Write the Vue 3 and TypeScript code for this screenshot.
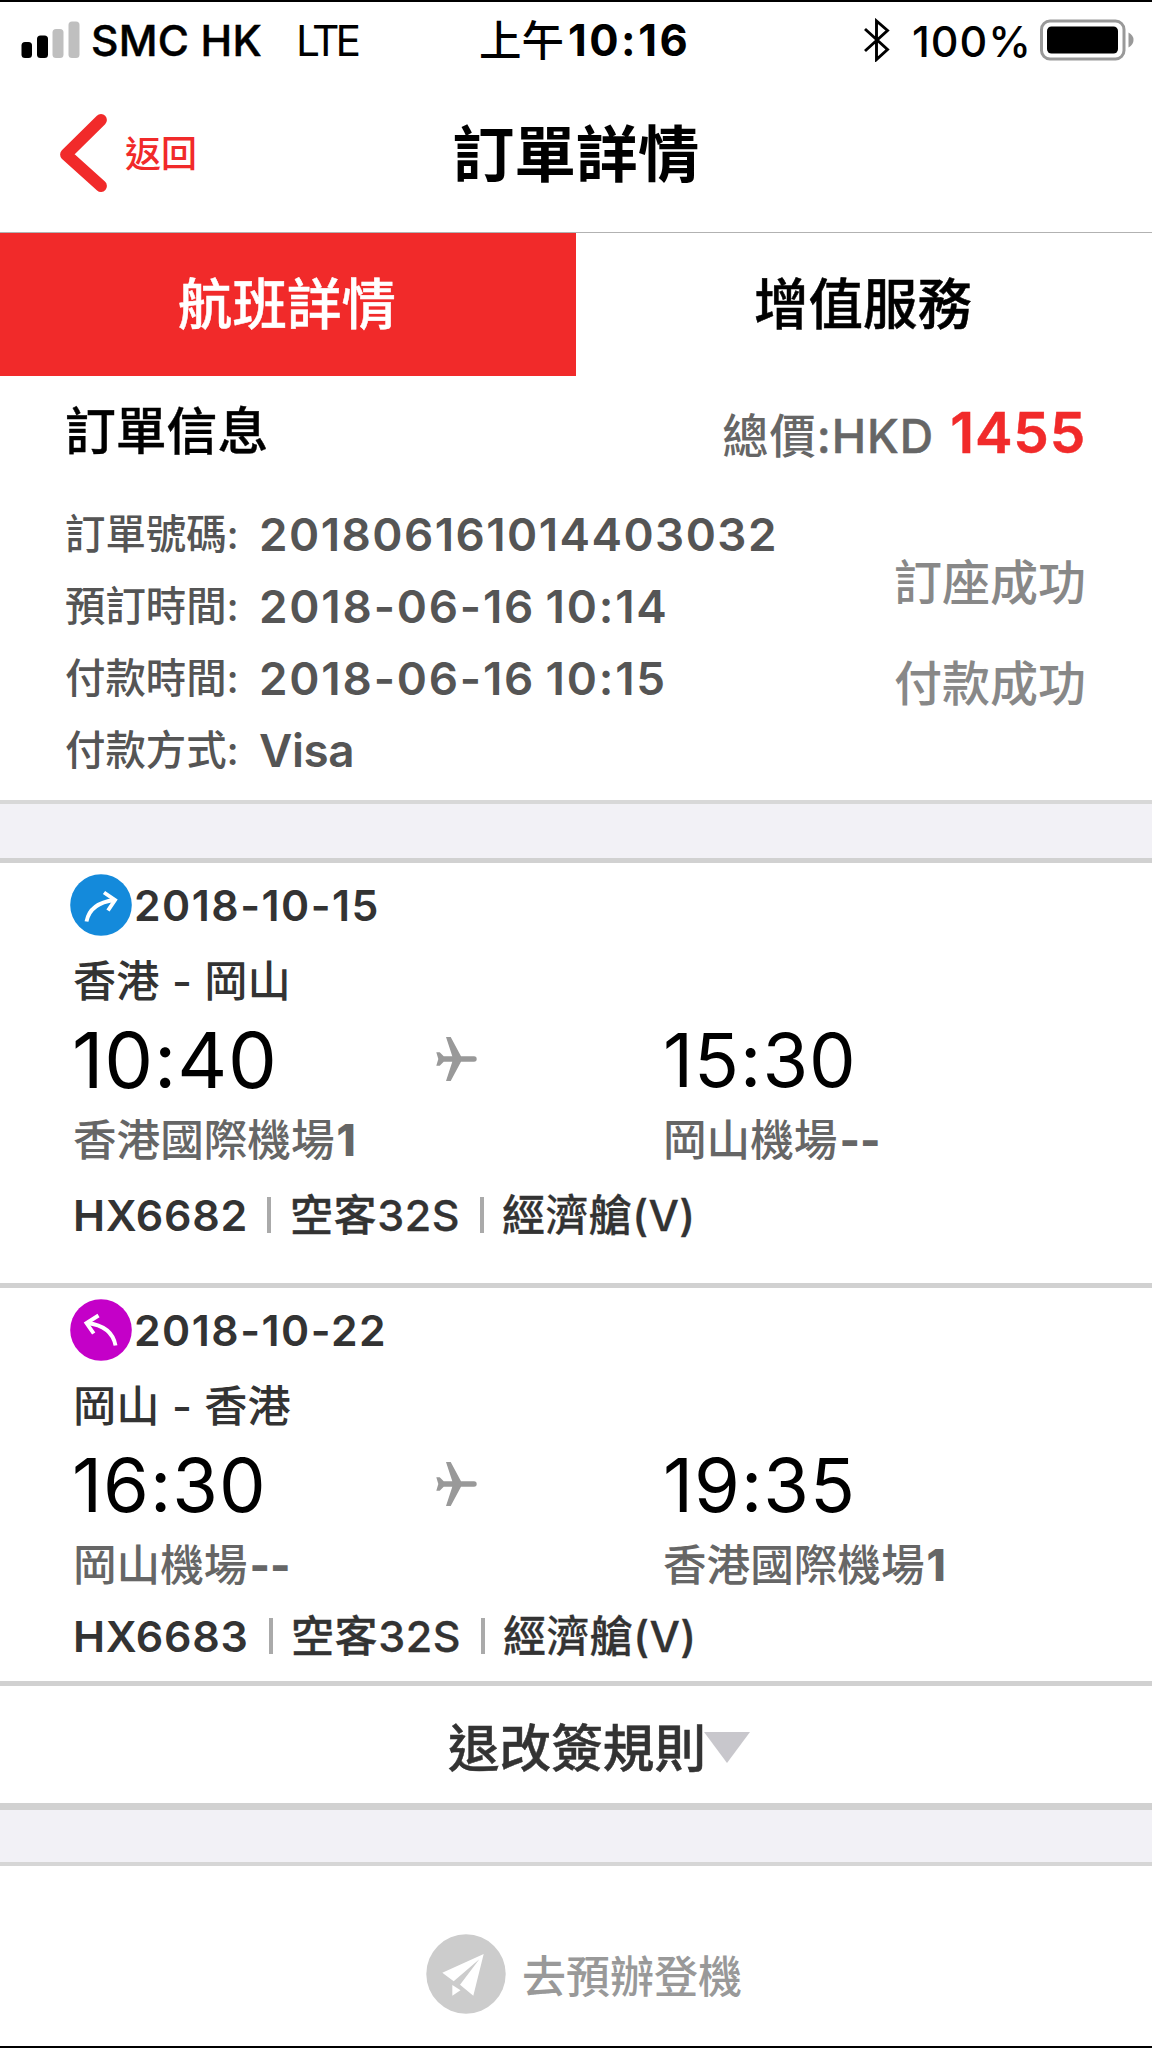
<script setup lang="ts">
interface Detail { label: string; value: string; kind: string }
interface Flight {
  id: string
  inbound: boolean
  date: string
  route: string
  depart: string
  arrive: string
  from: string
  fromTerminal: string
  to: string
  toTerminal: string
  flightNo: string
  craft: string
  cabin: string
}

const details: Detail[] = [
  { label: '訂單號碼:', value: '201806161014403032', kind: 'order-number' },
  { label: '預訂時間:', value: '2018-06-16 10:14', kind: 'order-time' },
  { label: '付款時間:', value: '2018-06-16 10:15', kind: 'order-time' },
  { label: '付款方式:', value: 'Visa', kind: 'order-method' },
]

const statuses: string[] = ['訂座成功', '付款成功']

const flights: Flight[] = [
  {
    id: 'outbound', inbound: false, date: '2018-10-15', route: '香港 - 岡山',
    depart: '10:40', arrive: '15:30', from: '香港國際機場', fromTerminal: '1',
    to: '岡山機場', toTerminal: '--', flightNo: 'HX6682', craft: '空客32S', cabin: '經濟艙(V)',
  },
  {
    id: 'inbound', inbound: true, date: '2018-10-22', route: '岡山 - 香港',
    depart: '16:30', arrive: '19:35', from: '岡山機場', fromTerminal: '--',
    to: '香港國際機場', toTerminal: '1', flightNo: 'HX6683', craft: '空客32S', cabin: '經濟艙(V)',
  },
]
</script>

<template>
  <div class="screen">
    <div class="status-bar">
      <svg class="signal" width="60" height="38" viewBox="0 0 60 38">
        <rect x="0.5" y="21" width="10.5" height="16" rx="3.5" fill="#000" />
        <rect x="16" y="14.5" width="11" height="22.5" rx="3.5" fill="#000" />
        <rect x="31.5" y="8" width="11" height="29" rx="3.5" fill="#bfbfbf" />
        <rect x="47.5" y="0.5" width="11" height="36.5" rx="3.5" fill="#bfbfbf" />
      </svg>
      <span class="carrier">SMC HK</span>
      <span class="network">LTE</span>
      <span class="clock"><span class="period">上午</span>10:16</span>
      <svg class="bluetooth" width="26" height="44" viewBox="0 0 26 44">
        <path d="M1 11 L23.500 31.500 L12.500 41.500 V3 L23.500 12.500 L1 33" fill="none" stroke="#000" stroke-width="2.900" />
      </svg>
      <span class="percent">100%</span>
      <svg class="battery" width="96" height="42" viewBox="0 0 96 42">
        <rect x="2.500" y="2" width="82.500" height="38" rx="8.500" fill="none" stroke="#999" stroke-width="3" />
        <rect x="8" y="7.500" width="71" height="27" rx="4.500" fill="#000" />
        <path d="M89.500 13.500 Q94.500 16 94.500 21 Q94.500 26 89.500 28.500 Z" fill="#999" />
      </svg>
    </div>

    <header class="nav">
      <div class="back">
        <svg width="49" height="78" viewBox="0 0 49 78">
          <path d="M42 6 L7 40.500 L42 72" fill="none" stroke="#f12a2a" stroke-width="11.800" stroke-linecap="round" stroke-linejoin="round" />
        </svg>
        <span>返回</span>
      </div>
      <h1>訂單詳情</h1>
    </header>

    <nav class="tabs">
      <div class="tab active">航班詳情</div>
      <div class="tab">增值服務</div>
    </nav>

    <section class="order">
      <div class="order-head">
        <h2>訂單信息</h2>
        <div class="price"><span>總價</span><span class="currency">:HKD</span><strong>1455</strong></div>
      </div>
      <div class="order-body">
        <div class="details">
          <div v-for="d in details" :key="d.label" class="detail">
            <span class="label">{{ d.label }}</span>
            <span class="value" :class="d.kind">{{ d.value }}</span>
          </div>
        </div>
        <div class="statuses">
          <div v-for="s in statuses" :key="s">{{ s }}</div>
        </div>
      </div>
    </section>

    <div class="band upper"></div>

    <section v-for="f in flights" :key="f.id" class="flight" :class="f.id">
      <div class="date-row">
        <svg width="62" height="62" viewBox="0 0 62 62">
          <circle cx="31" cy="31" r="30.800" :fill="f.inbound ? '#c400c8' : '#148adb'" />
          <g fill="none" stroke="#fff" stroke-width="3.900">
            <template v-if="f.inbound">
              <path d="M45.500 46.500 Q42 27 17 24" />
              <path d="M28.500 16.500 L16.500 24 L23.700 34.500" />
            </template>
            <template v-else>
              <path d="M16.500 47.500 Q20 29 44.500 26" />
              <path d="M34 18.500 L45 26 L38 36.500" />
            </template>
          </g>
        </svg>
        <span class="date">{{ f.date }}</span>
      </div>
      <div class="route">{{ f.route }}</div>
      <div class="times">
        <span class="time depart">{{ f.depart }}</span>
        <svg width="41" height="46" viewBox="0 0 41 46">
          <path d="M10 1 H14.700 L25 20.300 H38 Q40.700 20.300 40.700 23 Q40.700 25.700 38 25.700 H25 L14.700 45 H10 L16.300 25.700 H7.700 L3.700 29.700 H.3 L2.300 23 L.3 16.300 H3.700 L7.700 20.300 H16.300 Z" fill="#999" />
        </svg>
        <span class="time arrive">{{ f.arrive }}</span>
      </div>
      <div class="airports">
        <span>{{ f.from }}<b>{{ f.fromTerminal }}</b></span>
        <span>{{ f.to }}<b>{{ f.toTerminal }}</b></span>
      </div>
      <div class="meta">
        <span class="flight-no">{{ f.flightNo }}</span>
        <i></i>
        <span class="craft">{{ f.craft }}</span>
        <i></i>
        <span class="cabin">{{ f.cabin }}</span>
      </div>
    </section>

    <div class="rules">
      <span>退改簽規則</span>
      <svg width="46" height="31" viewBox="0 0 46 31"><path d="M0 0 H46 L23 31 Z" fill="#c8c7cc" /></svg>
    </div>

    <div class="band lower"></div>

    <footer class="checkin">
      <svg width="80" height="80" viewBox="0 0 80 80">
        <circle cx="40" cy="40" r="39.700" fill="#ccc" />
        <g fill="#fff">
          <path d="M57.700 20 L16.300 38.700 L27.700 47.300 L53.300 25.300 L34 50.700 L47.300 61.700 Z" />
          <path d="M26.300 51 L34.500 56.300 L26.300 61.700 Z" />
        </g>
      </svg>
      <span>去預辦登機</span>
    </footer>
  </div>
</template>

<style>
body { margin: 0; background: #fff; }
</style>

<style scoped>
.screen {
  box-sizing: border-box;
  width: 1152px;
  height: 2048px;
  overflow: hidden;
  background: #fff;
  border-top: 2px solid #000;
  border-bottom: 2px solid #000;
  font-family: Inter, "Noto Sans CJK TC", sans-serif;
  color: #333;
  white-space: nowrap;
}
h1, h2 { margin: 0; }
svg { display: block; flex: none; }

.status-bar {
  display: grid;
  grid-template-columns: 69px 206px 183px 385px 48px 127px 96px;
  align-items: center;
  height: 72px;
  padding-left: 21px;
  line-height: 72px;
  font-size: 42.5px;
  color: #000;
}
.carrier { font-weight: 500; padding-top: 2px; padding-left: 1px; letter-spacing: 0.2px; -webkit-text-stroke: 0.5px; }
.network { letter-spacing: -3.9px; padding-top: 2px; }
.clock { font-size: 43.5px; font-weight: 700; padding-top: 2px; letter-spacing: 2.5px; }
.period { font-size: 42.5px; font-weight: 500; letter-spacing: 0; margin-right: 4px; }
.percent { font-size: 43px; font-weight: 500; padding-top: 2px; letter-spacing: 1px; }

.nav {
  display: grid;
  grid-template-columns: 1fr auto 1fr;
  align-items: center;
  height: 158px;
}
.back {
  display: flex;
  align-items: center;
  gap: 17px;
  padding: 0 0 3px 59px;
  font-size: 36px;
  font-weight: 500;
  color: #f12a2a;
}
.back span { padding-bottom: 3px; }
h1 { font-size: 61.8px; line-height: 158px; padding-top: 2px; font-weight: 700; color: #000; }

.tabs { display: flex; height: 143px; border-top: 1px solid #b2b2b2; }
.tab {
  flex: 1;
  text-align: center;
  font-size: 54.5px;
  line-height: 143px;
  font-weight: 500;
  text-indent: -2px;
  -webkit-text-stroke: 0.5px;
  color: #000;
}
.tab.active { background: #f12a2a; color: #fff; }

.order-head { display: flex; justify-content: space-between; height: 111px; padding: 0 66px 0 65px; }
h2 { font-size: 50.8px; line-height: 112px; font-weight: 500; -webkit-text-stroke: 0.4px; color: #000; }
.price { padding-top: 5px; font-size: 46.2px; line-height: 111px; font-weight: 500; color: #666; }
.price > span { letter-spacing: 1px; }
.price .currency { -webkit-text-stroke: 0.5px; }
.price strong { margin-left: 16px; font-size: 56.5px; line-height: 0; font-weight: 600; letter-spacing: 0.8px; -webkit-text-stroke: 0.5px; color: #f12a2a; }
.order-body { display: flex; justify-content: space-between; height: 313px; padding: 0 66px 0 65px; }
.details { padding-top: 12px; }
.detail { display: flex; height: 72px; line-height: 72px; color: #555; }
.label { flex: 0 0 194px; font-size: 40.4px; font-weight: 500; }
.value { font-size: 45.8px; font-weight: 600; }
.order-number { letter-spacing: 1.45px; }
.order-time { letter-spacing: 1.8px; word-spacing: -3px; }
.order-method { letter-spacing: -0.4px; }
.statuses { padding-top: 45px; font-size: 48px; line-height: 101px; font-weight: 500; color: #888; }

.band { background: #f2f1f6; }
.upper { height: 54px; border-top: 4px solid #d8d8d8; border-bottom: 5px solid #d1d1d1; }
.lower { height: 52px; border-top: 7px solid #d1d1d1; border-bottom: 4px solid #d6d6d6; }

.flight { border-bottom: 5px solid #d1d1d1; }
.outbound { height: 420px; }
.inbound { height: 393px; }
.date-row { display: flex; align-items: center; gap: 2px; height: 84px; padding-left: 70px; }
.date { font-size: 42.7px; line-height: 84px; padding-top: 1px; font-weight: 600; letter-spacing: 1.5px; }
.route { height: 68px; padding-left: 73px; font-size: 43.2px; line-height: 69px; font-weight: 500; word-spacing: 1px; }
.times {
  display: grid;
  grid-template-columns: 364px 227px auto;
  align-items: center;
  height: 90px;
  padding-left: 72px;
  line-height: 90px;
  color: #000;
}
.times svg { margin-top: -2px; }
.time { font-size: 74px; letter-spacing: 1px; }
.outbound .depart { font-size: 77.5px; letter-spacing: 0.8px; }
.airports {
  display: grid;
  grid-template-columns: 591px auto;
  height: 69px;
  padding-left: 73px;
  font-size: 43.6px;
  line-height: 71px;
  font-weight: 500;
  color: #666;
}
.airports > span:last-child { margin-left: -1px; }
.airports b { margin-left: 2px; font-weight: 800; }
.meta {
  display: grid;
  grid-template-columns: 194px 23px 190px 22px auto;
  align-items: center;
  height: 81px;
  padding-left: 73px;
  font-size: 43px;
  line-height: 82px;
  font-weight: 500;
}
.flight-no { font-weight: 600; letter-spacing: 0.7px; }
.craft { letter-spacing: 0.6px; -webkit-text-stroke: 0.3px; }
.cabin { letter-spacing: 0.4px; -webkit-text-stroke: 0.3px; }
.inbound .meta { height: 74px; line-height: 74px; grid-template-columns: 196px 22px 190px 22px auto; }
.meta i { width: 4px; height: 36px; background: #aaa; }

.rules { display: flex; height: 117px; align-items: center; padding-left: 448px; }
.rules span { font-size: 51.6px; line-height: 117px; font-weight: 500; -webkit-text-stroke: 0.5px; padding-top: 7px; margin-right: -2px; }
.rules svg { margin-top: 5px; }

.checkin {
  box-sizing: border-box;
  display: flex;
  align-items: center;
  gap: 16px;
  height: 180px;
  padding: 36px 0 0 426px;
  font-size: 44px;
  font-weight: 500;
  color: #999;
}
</style>
